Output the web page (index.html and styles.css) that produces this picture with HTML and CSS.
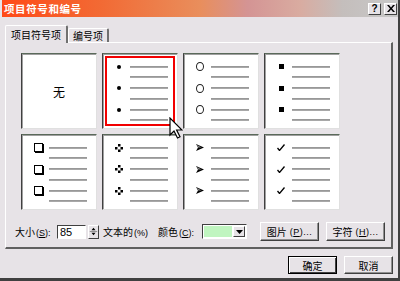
FILE: index.html
```html
<!DOCTYPE html>
<html lang="zh-CN">
<head>
    <meta charset="UTF-8">
    <title>项目符号和编号</title>
    <link rel="stylesheet" href="styles.css">
</head>
<body>
    <div class="window">
        <div class="titlebar">
            <span class="title">项目符号和编号</span>
            <div class="title-buttons">
                <span class="tbtn">?</span>
                <span class="tbtn close">
                    <svg width="8" height="7" viewBox="0 0 8 7"><path d="M0 0h2l2 2.5L6 0h2L5 3.5 8 7H6L4 4.5 2 7H0l3-3.5z" fill="#000"/></svg>
                </span>
            </div>
        </div>

        <div class="tabs">
            <div class="tab active">项目符号项</div>
            <div class="tab">编号项</div>
        </div>

        <div class="panel">
            <div class="grid">
                <div class="cell none">无</div>

                <div class="cell selected">
                    <div class="item"><span class="mark dot"></span><span class="line"></span><span class="line second"></span></div>
                    <div class="item"><span class="mark dot"></span><span class="line"></span><span class="line second"></span></div>
                    <div class="item"><span class="mark dot"></span><span class="line"></span><span class="line second"></span></div>
                </div>

                <div class="cell">
                    <div class="item"><span class="mark ring"></span><span class="line"></span><span class="line second"></span></div>
                    <div class="item"><span class="mark ring"></span><span class="line"></span><span class="line second"></span></div>
                    <div class="item"><span class="mark ring"></span><span class="line"></span><span class="line second"></span></div>
                </div>

                <div class="cell">
                    <div class="item"><span class="mark square"></span><span class="line"></span><span class="line second"></span></div>
                    <div class="item"><span class="mark square"></span><span class="line"></span><span class="line second"></span></div>
                    <div class="item"><span class="mark square"></span><span class="line"></span><span class="line second"></span></div>
                </div>

                <div class="cell">
                    <div class="item"><span class="mark box"></span><span class="line"></span><span class="line second"></span></div>
                    <div class="item"><span class="mark box"></span><span class="line"></span><span class="line second"></span></div>
                    <div class="item"><span class="mark box"></span><span class="line"></span><span class="line second"></span></div>
                </div>

                <div class="cell">
                    <div class="item"><span class="mark"><svg width="8" height="8" viewBox="0 0 8 8"><rect x="3" y="0" width="2.5" height="2.5"/><rect x="0" y="3" width="2.5" height="2.5"/><rect x="5.5" y="3" width="2.5" height="2.5"/><rect x="3" y="5.5" width="2.5" height="2.5"/></svg></span><span class="line"></span><span class="line second"></span></div>
                    <div class="item"><span class="mark"><svg width="8" height="8" viewBox="0 0 8 8"><rect x="3" y="0" width="2.5" height="2.5"/><rect x="0" y="3" width="2.5" height="2.5"/><rect x="5.5" y="3" width="2.5" height="2.5"/><rect x="3" y="5.5" width="2.5" height="2.5"/></svg></span><span class="line"></span><span class="line second"></span></div>
                    <div class="item"><span class="mark"><svg width="8" height="8" viewBox="0 0 8 8"><rect x="3" y="0" width="2.5" height="2.5"/><rect x="0" y="3" width="2.5" height="2.5"/><rect x="5.5" y="3" width="2.5" height="2.5"/><rect x="3" y="5.5" width="2.5" height="2.5"/></svg></span><span class="line"></span><span class="line second"></span></div>
                </div>

                <div class="cell">
                    <div class="item"><span class="mark"><svg width="8" height="7" viewBox="0 0 8 7"><path d="M0 0L8 3.5 0 7 2 3.5z" fill="#000"/><path d="M1 1L5.5 3.5 2 3.5z" fill="#888"/></svg></span><span class="line"></span><span class="line second"></span></div>
                    <div class="item"><span class="mark"><svg width="8" height="7" viewBox="0 0 8 7"><path d="M0 0L8 3.5 0 7 2 3.5z" fill="#000"/><path d="M1 1L5.5 3.5 2 3.5z" fill="#888"/></svg></span><span class="line"></span><span class="line second"></span></div>
                    <div class="item"><span class="mark"><svg width="8" height="7" viewBox="0 0 8 7"><path d="M0 0L8 3.5 0 7 2 3.5z" fill="#000"/><path d="M1 1L5.5 3.5 2 3.5z" fill="#888"/></svg></span><span class="line"></span><span class="line second"></span></div>
                </div>

                <div class="cell">
                    <div class="item"><span class="mark"><svg width="8" height="7" viewBox="0 0 8 7"><path d="M0.5 4L2.5 6.5 7.5 0.5" fill="none" stroke="#000" stroke-width="1.3"/></svg></span><span class="line"></span><span class="line second"></span></div>
                    <div class="item"><span class="mark"><svg width="8" height="7" viewBox="0 0 8 7"><path d="M0.5 4L2.5 6.5 7.5 0.5" fill="none" stroke="#000" stroke-width="1.3"/></svg></span><span class="line"></span><span class="line second"></span></div>
                    <div class="item"><span class="mark"><svg width="8" height="7" viewBox="0 0 8 7"><path d="M0.5 4L2.5 6.5 7.5 0.5" fill="none" stroke="#000" stroke-width="1.3"/></svg></span><span class="line"></span><span class="line second"></span></div>
                </div>
            </div>

            <div class="options">
                <span class="label size-label">大小<span class="key">(<u>S</u>):</span></span>
                <span class="field">85</span>
                <span class="spinner">
                    <svg width="11" height="13" viewBox="0 0 11 13"><path d="M5.5 2L3 5h5z M3 8h5l-2.5 3z" fill="#000"/><path d="M1 6.5h9" stroke="#808080"/></svg>
                </span>
                <span class="label percent">文本的<span class="key">(%)</span></span>
                <span class="label color-label">颜色<span class="key">(<u>C</u>):</span></span>
                <span class="color-pick">
                    <span class="swatch"></span>
                    <span class="drop"><svg width="7" height="4" viewBox="0 0 7 4"><path d="M0 0h7L3.5 4z" fill="#000"/></svg></span>
                </span>
                <span class="button picture">图片<span class="key">(<u>P</u>)...</span></span>
                <span class="button">字符<span class="key">(<u>H</u>)...</span></span>
            </div>
        </div>

        <div class="actions">
            <span class="button default">确定</span>
            <span class="button">取消</span>
        </div>

        <!-- mouse pointer over the selected bullet -->
        <svg class="cursor" width="14" height="22" viewBox="0 0 14 22">
            <path d="M1 1v17l4-4 3.5 7 2.5-1.2-3.4-6.8H13z" fill="#fff" stroke="#000" stroke-width="1.2" stroke-linejoin="miter"/>
        </svg>
    </div>
</body>
</html>
```

FILE: styles.css
```css
* {
    margin: 0;
    padding: 0;
    box-sizing: border-box;
}

body {
    width: 400px;
    height: 281px;
    overflow: hidden;
    font-family: "Noto Sans CJK SC", "Liberation Sans", sans-serif;
    font-size: 10px;
    color: #000;
}

.window {
    position: relative;
    width: 400px;
    height: 281px;
    background: #e7e3e7;
    border-right: 2px solid #404040;
    border-bottom: 3px solid #404040;
    padding-left: 2px;
    display: flex;
    flex-direction: column;
}

.titlebar {
    height: 17px;
    display: flex;
    align-items: center;
    justify-content: space-between;
    background: linear-gradient(90deg, #ff4a18 0%, #f26a34 25%, #e98e5c 50%, #d49494 62%, #d9aba0 75%, #c4bebc 86%, #c8c8c8 100%);
}

.title {
    color: #fff;
    font-weight: bold;
    font-size: 10.5px;
    line-height: 17px;
    padding-left: 2px;
    letter-spacing: 0.6px;
}

.title-buttons {
    display: flex;
    gap: 3px;
    padding-right: 1px;
}

.tbtn {
    width: 13px;
    height: 12px;
    display: flex;
    align-items: center;
    justify-content: center;
    background: #e7e3e7;
    border-top: 1px solid #fff;
    border-left: 1px solid #fff;
    border-right: 1px solid #404040;
    border-bottom: 1px solid #404040;
    font-family: "Liberation Sans", sans-serif;
    font-weight: bold;
    font-size: 10px;
    line-height: 10px;
}

.tabs {
    display: flex;
    align-items: flex-end;
    height: 25px;
    padding-left: 3px;
}

.tab {
    height: 14px;
    padding: 0 4px;
    line-height: 14px;
    border-top: 1px solid #fff;
    border-left: 1px solid #fff;
    border-right: 2px solid #707070;
    border-top-left-radius: 2px;
    border-top-right-radius: 2px;
}

.tab.active {
    height: 18px;
    width: 63px;
    padding: 0;
    text-align: center;
    line-height: 17px;
    margin-bottom: -1px;
    background: #e7e3e7;
    position: relative;
    z-index: 1;
}

.panel {
    margin: 0 5px 0 3px;
    height: 207px;
    border-top: 1px solid #fff;
    border-left: 1px solid #fff;
    border-right: 2px solid #606060;
    border-bottom: 2px solid #606060;
    padding: 10px 0 0 9px;
}

.grid {
    display: grid;
    grid-template-columns: repeat(4, 76px);
    grid-template-rows: repeat(2, 76px);
    column-gap: 5px;
    row-gap: 5px;
    margin-left: 6px;
}

.cell {
    background: #fff;
    border-top: 1px solid #5a6a5a;
    border-left: 1px solid #404040;
    border-right: 1px solid #e0e0e0;
    border-bottom: 1px solid #e0e0e0;
    box-shadow: inset 1px 1px 0 #a0a0a0;
    padding: 7px 0 0 11px;
}

.cell.none {
    display: flex;
    align-items: center;
    justify-content: center;
    font-size: 12px;
    padding: 0;
}

.cell.selected {
    box-shadow: inset 1px 1px 0 #a0a0a0, inset 0 0 0 2px #fff, inset 0 0 0 4px #f20000;
}

.item {
    display: grid;
    grid-template-columns: 16px 38px;
    grid-template-rows: 11px 10.5px;
    align-items: center;
}

.mark {
    grid-row: 1;
    grid-column: 1;
    justify-self: start;
    display: flex;
    align-items: center;
    justify-content: center;
    width: 10px;
}

.line {
    grid-column: 2;
    grid-row: 1;
    height: 2px;
    background: #a8a8a8;
    border-top: 1px solid #989898;
}

.line.second {
    grid-row: 2;
}

.dot::before {
    content: "";
    width: 4px;
    height: 4px;
    border-radius: 50%;
    background: #000;
}

.ring::before {
    content: "";
    width: 6px;
    height: 7px;
    border: 1px solid #222;
    border-radius: 50%;
}

.square::before {
    content: "";
    width: 5px;
    height: 5px;
    background: #000;
}

.box::before {
    content: "";
    width: 7px;
    height: 7px;
    border: 1px solid #000;
    box-shadow: 1px 1px 0 #000;
}

.options {
    display: flex;
    align-items: center;
    height: 19px;
    margin-top: 12px;
}

.label {
    white-space: nowrap;
}

.size-label {
    width: 40px;
}

.key {
    font-family: "Liberation Sans", sans-serif;
    font-size: 9px;
    margin-left: 1px;
}

.field {
    width: 29px;
    height: 14px;
    margin-left: 2px;
    background: #fff;
    border-top: 1px solid #404040;
    border-left: 1px solid #404040;
    border-right: 1px solid #fff;
    border-bottom: 1px solid #fff;
    font-family: "Liberation Sans", sans-serif;
    font-size: 11px;
    line-height: 12px;
    padding-left: 2px;
}

.spinner {
    width: 11px;
    height: 14px;
    margin-left: 2px;
    display: flex;
    align-items: center;
    justify-content: center;
    border-top: 1px solid #fff;
    border-left: 1px solid #fff;
    border-right: 1px solid #404040;
    border-bottom: 1px solid #404040;
}

.percent {
    width: 46px;
    margin-left: 4px;
}

.color-label {
    width: 40px;
    margin-left: 9px;
}

.color-pick {
    display: flex;
    width: 45px;
    height: 15px;
    margin-left: 4px;
    border-top: 1px solid #404040;
    border-left: 1px solid #404040;
    border-right: 1px solid #fff;
    border-bottom: 1px solid #fff;
    background: #fff;
    padding: 1px;
}

.swatch {
    flex: 1;
    background: #c0f5c0;
}

.drop {
    width: 12px;
    margin-left: 1px;
    display: flex;
    align-items: center;
    justify-content: center;
    background: #e7e3e7;
    border-top: 1px solid #fff;
    border-left: 1px solid #fff;
    border-right: 1px solid #404040;
    border-bottom: 1px solid #404040;
}

.button {
    display: flex;
    align-items: center;
    justify-content: center;
    height: 19px;
    width: 59px;
    border-top: 1px solid #fff;
    border-left: 1px solid #fff;
    border-right: 1px solid #404040;
    border-bottom: 1px solid #404040;
    box-shadow: inset -1px -1px 0 #909090;
    white-space: nowrap;
}

.button .key {
    margin-left: 3px;
    letter-spacing: 0.5px;
}

.options .button {
    margin-left: 7px;
}

.options .picture {
    margin-left: 13px;
}

.actions {
    display: flex;
    justify-content: flex-end;
    gap: 7px;
    margin-top: 7px;
    padding-right: 5px;
}

.actions .button {
    width: 49px;
    height: 18px;
}

.button.default {
    border: 1px solid #000;
    box-shadow: inset 1px 1px 0 #fff, inset -1px -1px 0 #404040;
}

.cursor {
    position: absolute;
    left: 169px;
    top: 117px;
}
```
